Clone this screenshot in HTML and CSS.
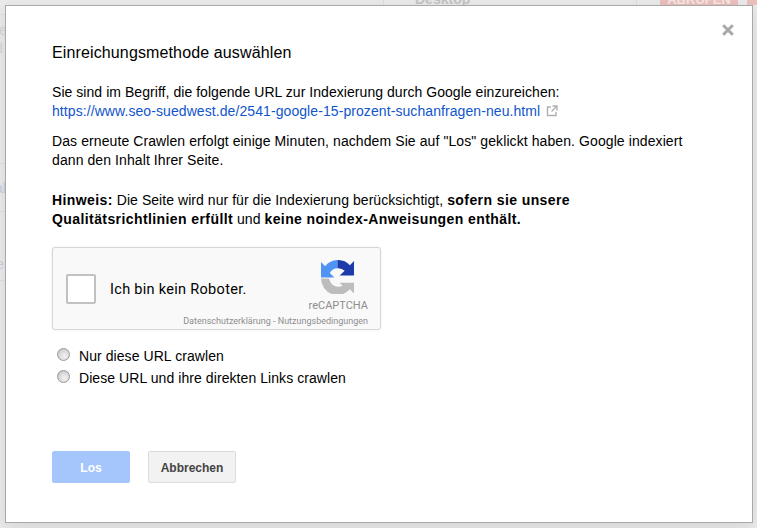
FILE: index.html
```html
<!DOCTYPE html>
<html lang="de">
<head>
<meta charset="utf-8">
<title>Einreichungsmethode auswählen</title>
<link rel="stylesheet" href="styles.css">
</head>
<body>
<div class="backdrop" aria-hidden="true">
  <span class="bg-desktop">Desktop</span>
  <span class="bg-divider-a"></span>
  <span class="bg-divider-b"></span>
  <span class="bg-button">ABRUFEN</span>
  <span class="bg-button-b"></span>
  <span class="bg-letter bg-l1">le</span>
  <span class="bg-letter bg-l2">d</span>
  <span class="bg-letter bg-l3">al</span>
  <span class="bg-letter bg-l4">e</span>
  <span class="bg-line bg-r1"></span>
  <span class="bg-line bg-r2"></span>
  <span class="bg-line bg-r3"></span>
  <span class="bg-line bg-r4"></span>
</div>
<main class="dialog">
  <svg class="close" width="12" height="12" viewBox="0 0 12 12" aria-label="Schließen"><path d="M1.2 1.2 10.8 10.8M10.8 1.2 1.2 10.8" stroke="#a8a8a8" stroke-width="3" fill="none"/></svg>
  <h1 class="title">Einreichungsmethode auswählen</h1>
  <p class="para para-a">Sie sind im Begriff, die folgende URL zur Indexierung durch Google einzureichen:<br>
    <a class="link" href="#">https://www.seo-suedwest.de/2541-google-15-prozent-suchanfragen-neu.html</a><svg class="ext" width="12" height="12" viewBox="0 0 12 12"><path d="M5 2H1.5V10.5H10V7M6.5 1H11V5.5M11 1 5.5 6.5" stroke="#b0b0b0" stroke-width="1.4" fill="none"/></svg></p>
  <p class="para para-b">Das erneute Crawlen erfolgt einige Minuten, nachdem Sie auf "Los" geklickt haben. Google indexiert dann den Inhalt Ihrer Seite.</p>
  <p class="para para-c"><b class="strong">Hinweis:</b> Die Seite wird nur für die Indexierung berücksichtigt, <b class="strong">sofern sie unsere Qualitätsrichtlinien erfüllt</b> und <b class="strong">keine noindex-Anweisungen enthält.</b></p>
  <div class="captcha">
    <span class="check"></span>
    <span class="captcha-label">Ich bin kein Roboter.</span>
    <div class="captcha-brand">
      <svg class="logo" width="33" height="34" viewBox="0 0 32 33">
        <path d="M0 18H8A9 9 0 0 0 21 25L18 22H32V32.5L28 28.5A16 16 0 0 1 0 18Z" fill="#bdbdbd"/>
        <path d="M16 0A16 16 0 0 0 4 6L0 2V17H13L8.5 12.500A9 9 0 0 1 16 8Z" fill="#4f94f4"/>
        <path d="M16 0A16 16 0 0 1 28 5L32 1V15H18L23 10.500A9 9 0 0 0 16 8Z" fill="#1c3aa9"/>
      </svg>
      <span class="brand-name">reCAPTCHA</span>
    </div>
    <span class="captcha-terms">Datenschutzerklärung - Nutzungsbedingungen</span>
  </div>
  <div class="radios">
    <label class="radio-row"><input class="radio" type="radio" name="m"><span>Nur diese URL crawlen</span></label>
    <label class="radio-row"><input class="radio" type="radio" name="m"><span>Diese URL und ihre direkten Links crawlen</span></label>
  </div>
  <div class="actions">
    <button class="btn btn-go" type="button">Los</button>
    <button class="btn btn-cancel" type="button">Abbrechen</button>
  </div>
</main>
</body>
</html>
```

FILE: styles.css
```css
* { box-sizing: border-box; }
html, body { margin: 0; height: 100%; }
body {
  position: relative;
  width: 757px;
  height: 528px;
  overflow: hidden;
  background: #ebebeb;
  font-family: "Liberation Sans", Arial, sans-serif;
  color: #000;
  padding: 5px 4px 5px 5px;
}
.backdrop { position: absolute; inset: 0; overflow: hidden; }
.backdrop span { position: absolute; }
.bg-desktop { left: 415px; top: -9px; font-size: 14px; font-weight: 700; color: #c4c4c4; }
.bg-divider-a { left: 383px; top: 0; width: 1px; height: 5px; background: #dcdcdc; }
.bg-divider-b { left: 636px; top: 0; width: 1px; height: 5px; background: #dcdcdc; }
.bg-button { left: 660px; top: -8px; width: 78px; height: 13px; background: #ecc0bc; color: #f7e8e6; font-size: 13px; font-weight: 700; text-align: center; }
.bg-button-b { left: 747px; top: 0; width: 10px; height: 5px; background: #ecc0bc; }
.bg-letter { left: -6px; font-size: 14px; color: #d6d6d6; }
.bg-l1 { top: 22px; left: -4px; }
.bg-l2 { top: 40px; left: -5px; }
.bg-l3 { top: 180px; left: -5px; color: #c5cde0; }
.bg-l4 { top: 256px; left: -4px; color: #d5c8e4; }
.bg-line { left: 0; width: 5px; height: 1px; background: #dfdfdf; }
.bg-r1 { top: 14px; }
.bg-r2 { top: 163px; }
.bg-r3 { top: 211px; }
.bg-r4 { top: 280px; }

.dialog {
  position: relative;
  width: 748px;
  height: 518px;
  background: #fff;
  border: 1px solid #a9a9a9;
  padding: 38px 46px 0;
  box-shadow: 0 4px 16px rgba(0, 0, 0, .1);
}
.close { position: absolute; right: 18px; top: 18px; }
.title { margin: 0 0 21px; font-size: 16px; font-weight: 400; line-height: 18px; letter-spacing: .13px; }
.para { margin: 0; font-size: 14px; line-height: 19px; width: 640px; }
.para-a { letter-spacing: .05px; }
.para-b { margin-top: 11px; letter-spacing: .09px; }
.para-c { margin-top: 21px; letter-spacing: .05px; }
.strong { letter-spacing: .41px; }
.link { color: #1155cc; text-decoration: none; letter-spacing: .08px; }
.ext { margin-left: 6px; vertical-align: -1px; }

.captcha {
  position: relative;
  display: flex;
  align-items: center;
  width: 329px;
  height: 83px;
  margin-top: 18px;
  padding: 0 0 0 13px;
  background: #f9f9f9;
  border: 1px solid #d6d6d6;
  border-radius: 3px;
  box-shadow: 0 0 3px rgba(0, 0, 0, .08);
  font-family: Roboto, "Liberation Sans", sans-serif;
}
.check { width: 30px; height: 30px; background: #fff; border: 2px solid #c1c1c1; border-radius: 2px; }
.captcha-label { margin: 2px 0 0 14px; font-size: 14.5px; letter-spacing: .3px; }
.captcha-brand {
  position: absolute;
  right: 12px;
  top: 12px;
  display: flex;
  flex-direction: column;
  align-items: flex-end;
}
.logo { margin-right: 14px; }
.brand-name { margin-top: 5px; font-size: 11px; line-height: 14px; color: #8d8d8d; }
.captcha-terms { position: absolute; right: 12px; bottom: 2px; font-size: 9px; line-height: 12px; color: #8d8d8d; }

.radios { margin-top: 15px; font-size: 14px; line-height: 22px; letter-spacing: .07px; }
.radio-row { display: flex; align-items: center; }
.radio {
  appearance: none;
  width: 13px;
  height: 13px;
  margin: 0 9px 3px 5px;
  border: 1px solid #9a9a9a;
  border-radius: 50%;
  background: radial-gradient(circle at 60% 65%, #f2f2f2 0, #d8d8d8 55%, #b4b4b4 100%);
}

.actions { display: flex; gap: 18px; margin-top: 62px; }
.btn {
  height: 32px;
  border-radius: 2px;
  font-family: "Liberation Sans", Arial, sans-serif;
  font-size: 12px;
  font-weight: 700;
  padding: 1px 0 0;
}
.btn-go { width: 78px; background: #a5c6fd; border: 1px solid #a5c6fd; color: #fff; }
.btn-cancel { width: 88px; background: #f2f2f2; border: 1px solid #dcdcdc; color: #444; }
```
